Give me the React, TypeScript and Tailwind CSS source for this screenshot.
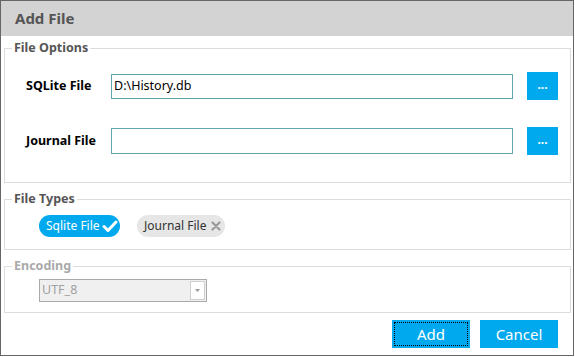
import React from "react";

const font = { fontFamily: '"Noto Sans", "Open Sans", sans-serif' };

function Check() {
  return (
    <svg width="16" height="14" viewBox="0 0 16 14" className="ml-[2px]">
      <path d="M2 7.5 L6 11.5 L14 3" fill="none" stroke="#ffffff" strokeWidth="3" strokeLinecap="round" strokeLinejoin="round" />
    </svg>
  );
}

function Cross() {
  return (
    <svg width="10" height="10" viewBox="0 0 10 10" className="ml-[5px]">
      <path d="M1.5 1.5 L8.5 8.5 M8.5 1.5 L1.5 8.5" fill="none" stroke="#9a9a9a" strokeWidth="2.2" strokeLinecap="round" />
    </svg>
  );
}

export default function App() {
  return (
    <div className="w-[575px] h-[357px] bg-white" style={font}>
      <div className="w-[574px] h-[356px] border border-[#666666] flex flex-col">
        <div className="h-[35px] bg-[#d3d3d3] flex items-center pl-[14px] shrink-0">
          <span className="text-[15px] font-bold text-[#555555]">Add File</span>
        </div>

        <fieldset className="ml-[3px] mr-[2px] mt-[4px] border border-[#dcdcdc] px-0 pb-[27px] pt-0">
          <legend className="ml-[7px] px-[2px] text-[12.5px] leading-[16px] font-bold text-[#555555]">File Options</legend>
          <div className="flex items-center pl-[21px] mt-[16px] h-[28px]">
            <span className="w-[85px] text-[12.5px] font-bold text-black">SQLite File</span>
            <div className="w-[402px] h-[25px] border border-[#62a6ab] flex items-center pl-[2px] text-[12.5px] text-black">D:\History.db</div>
            <button className="ml-[14px] w-[31px] h-[28px] bg-[#00a9ee] text-white text-[12px] font-bold leading-none flex items-center justify-center pb-[2px]">...</button>
          </div>
          <div className="flex items-center pl-[21px] mt-[27px] h-[28px]">
            <span className="w-[85px] text-[12.5px] font-bold text-black">Journal File</span>
            <div className="w-[402px] h-[26px] border border-[#62a6ab]"></div>
            <button className="ml-[14px] w-[31px] h-[28px] bg-[#00a9ee] text-white text-[12px] font-bold leading-none flex items-center justify-center pb-[2px]">...</button>
          </div>
        </fieldset>

        <fieldset className="ml-[3px] mr-[2px] mt-[8px] border border-[#dcdcdc] px-0 pb-[12px] pt-0">
          <legend className="ml-[7px] px-[2px] text-[12.5px] leading-[16px] font-bold text-[#555555]">File Types</legend>
          <div className="flex items-center pl-[34px] mt-[8px] gap-[17px]">
            <div className="h-[22px] w-[81px] rounded-full bg-[#00a9ee] flex items-center pl-[7px] text-[12px] text-white">
              <span>Sqlite File</span>
              <Check />
            </div>
            <div className="h-[22px] w-[88px] rounded-full bg-[#e6e6e6] flex items-center pl-[7px] text-[12px] text-[#333333]">
              <span>Journal File</span>
              <Cross />
            </div>
          </div>
        </fieldset>

        <fieldset className="ml-[3px] mr-[2px] mt-[8px] border border-[#dcdcdc] px-0 pb-[10px] pt-0">
          <legend className="ml-[7px] px-[2px] text-[12.5px] leading-[16px] font-bold text-[#a9a9a9]">Encoding</legend>
          <div className="pl-[34px] mt-[5px]">
            <div className="w-[168px] h-[23px] border border-[#a9a9a9] bg-[#f0f0f0] flex items-center justify-between pl-[2px] pr-[1px]">
              <span className="text-[12.5px] text-[#a0a0a0]">UTF_8</span>
              <div className="w-[15px] h-[19px] bg-white border border-[#cfcfcf] flex items-center justify-center">
                <svg width="5" height="3" viewBox="0 0 5 3"><path d="M0 0 H5 L2.5 3 Z" fill="#999999" /></svg>
              </div>
            </div>
          </div>
        </fieldset>

        <div className="flex justify-end gap-[10px] mt-[7px] pr-[15px]">
          <button className="w-[78px] h-[28px] bg-[#00a9ee] text-white text-[15px] relative">
            <span className="absolute inset-[2px] border border-dotted border-black"></span>
            Add
          </button>
          <button className="w-[78px] h-[28px] bg-[#00a9ee] text-white text-[15px]">Cancel</button>
        </div>
      </div>
    </div>
  );
}
